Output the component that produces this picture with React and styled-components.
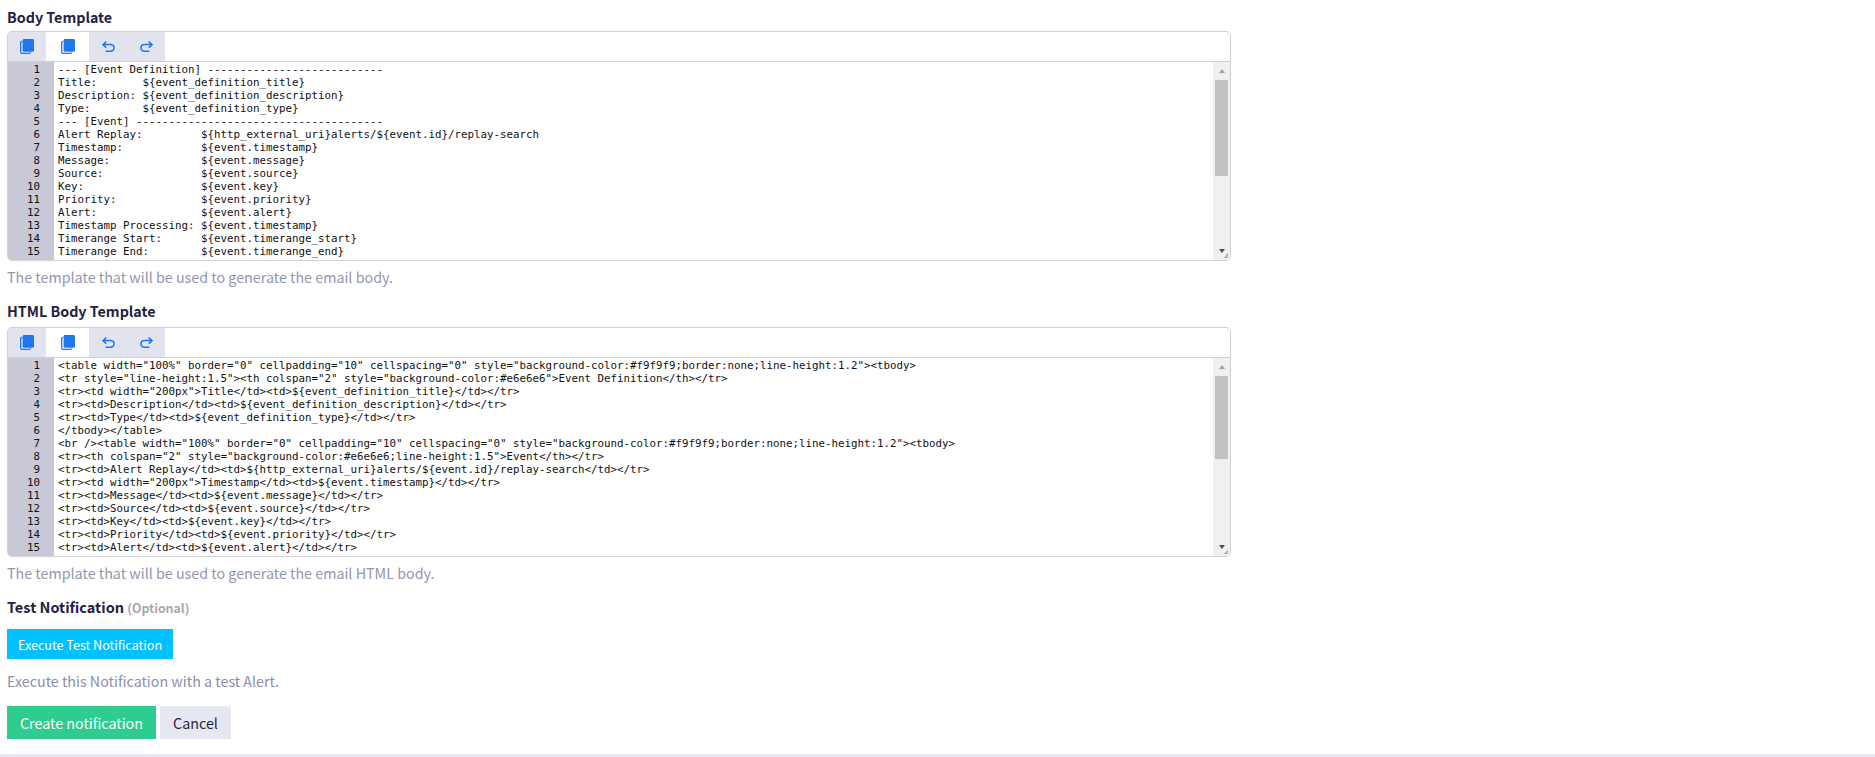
import React from "react";
import styled, { createGlobalStyle } from "styled-components";

const GlobalStyle = createGlobalStyle`
  html, body {
    margin: 0;
    padding: 0;
    background: #fff;
  }
  body {
    font-family: "Noto Sans CJK JP", "Source Sans Pro", sans-serif;
    color: #1f1f3d;
  }
`;

const Page = styled.div`
  height: 757px;
  box-sizing: border-box;
  padding: 6px 644px 0 7px;
  border-bottom: 3px solid #e8e8f1;
  overflow: hidden;
`;

const Field = styled.div`
  margin-bottom: 13px;
`;

const Label = styled.div`
  font-size: 14.3px;
  font-weight: 700;
  line-height: 21px;
  height: ${(p) => p.$h || 25}px;
  color: #1f2340;

  small {
    font-size: 12.3px;
    color: #a6a6ae;
    font-weight: 700;
  }
`;

const Help = styled.div`
  font-size: 14.3px;
  line-height: 20px;
  margin-top: 6px;
  color: #9397ad;
`;

const EditorBox = styled.div`
  border: 1px solid #cfcfd6;
  border-radius: 5px;
  height: 230px;
  box-sizing: border-box;
  overflow: hidden;
  position: relative;
  display: flex;
  flex-direction: column;
`;

const Toolbar = styled.div`
  display: flex;
  height: 29px;
  flex: none;
  border-bottom: 1px solid #cfcfd6;
`;

const ToolButton = styled.div`
  width: ${(p) => p.$w}px;
  display: flex;
  align-items: center;
  justify-content: center;
  background: ${(p) => (p.$active ? "#fff" : "#e1e4ef")};
`;

const EditorBody = styled.div`
  flex: 1;
  display: flex;
  min-height: 0;
`;

const Gutter = styled.div`
  width: 46px;
  flex: none;
  box-sizing: border-box;
  background: #c9c8d7;
  padding: 1px 14px 0 0;
  text-align: right;
  overflow: hidden;
`;

const Code = styled.pre`
  flex: 1;
  margin: 0;
  padding: 1px 0 0 4px;
  overflow: hidden;
  color: #111;
`;

const Line = styled.div`
  font-family: "DejaVu Sans Mono", monospace;
  font-size: 10.8px;
  line-height: 13px;
  height: 13px;
  white-space: pre;
  color: #111;
`;

const Scrollbar = styled.div`
  width: 17px;
  flex: none;
  background: #f0f0f0;
  display: flex;
  flex-direction: column;
  align-items: center;
`;

const Arrow = styled.div`
  width: 0;
  height: 0;
  flex: none;
  border-left: 3.5px solid transparent;
  border-right: 3.5px solid transparent;
  ${(p) =>
    p.$down
      ? "border-top: 4px solid #505050; margin-top: auto; margin-bottom: 7px;"
      : "border-bottom: 4px solid #a3a3a3; margin-top: 7px;"}
`;

const Thumb = styled.div`
  width: 13px;
  height: ${(p) => p.$h}px;
  margin-top: 7px;
  background: #c1c1c1;
  flex: none;
`;

const Grip = styled.div`
  position: absolute;
  right: 2px;
  bottom: 2px;
  width: 5px;
  height: 5px;
  background: linear-gradient(135deg, transparent 50%, #b4b4b4 50%);
`;

const TestLabel = styled(Label)`
  font-size: 14.5px;
  height: 32px;
  line-height: 20px;
  padding-top: 1px;
`;

const ExecuteButton = styled.button`
  display: block;
  width: 166px;
  height: 30px;
  padding: 0;
  border: 0;
  background: #00c1ff;
  color: #fff;
  font-family: inherit;
  font-size: 12.6px;
`;

const TestHelp = styled(Help)`
  margin-top: 12px;
  color: #8e8ea8;
`;

const Actions = styled.div`
  display: flex;
  gap: 4px;
  margin-top: 15px;
`;

const ActionButton = styled.button`
  height: 33px;
  width: ${(p) => p.$w}px;
  padding: 0;
  border: 0;
  font-family: inherit;
  font-size: 14.3px;
  background: ${(p) => (p.$primary ? "#2ecc8f" : "#e6e8f1")};
  color: ${(p) => (p.$primary ? "#fff" : "#1f2340")};
`;

const CopyIcon = () => (
  <svg width="14" height="15" viewBox="0 0 14 15">
    <path
      d="M2.2 2.4 H1.8 A1.2 1.2 0 0 0 0.7 3.6 V13 A1.3 1.3 0 0 0 2 14.3 H9.4 A1.2 1.2 0 0 0 10.6 13.2"
      fill="none"
      stroke="#1f77ee"
      strokeWidth="1.3"
    />
    <rect x="2.6" y="0" width="11.4" height="12.8" rx="1.4" fill="#1f77ee" />
  </svg>
);

const UndoIcon = ({ flip }) => (
  <svg width="13" height="11" viewBox="0 0 13 11" style={flip ? { transform: "scaleX(-1)" } : undefined}>
    <path
      d="M4.2 0.6 L1 3.6 L4.2 6.6 M1.2 3.6 H8.2 C10.6 3.6 12 4.9 12 6.8 C12 8.8 10.5 10.2 8.2 10.2 H3.6"
      fill="none"
      stroke="#1f77ee"
      strokeWidth="1.5"
    />
  </svg>
);

const bodyLines = [
  "--- [Event Definition] ---------------------------",
  "Title:       ${event_definition_title}",
  "Description: ${event_definition_description}",
  "Type:        ${event_definition_type}",
  "--- [Event] --------------------------------------",
  "Alert Replay:         ${http_external_uri}alerts/${event.id}/replay-search",
  "Timestamp:            ${event.timestamp}",
  "Message:              ${event.message}",
  "Source:               ${event.source}",
  "Key:                  ${event.key}",
  "Priority:             ${event.priority}",
  "Alert:                ${event.alert}",
  "Timestamp Processing: ${event.timestamp}",
  "Timerange Start:      ${event.timerange_start}",
  "Timerange End:        ${event.timerange_end}",
  "Fields:",
];

const htmlLines = [
  '<table width="100%" border="0" cellpadding="10" cellspacing="0" style="background-color:#f9f9f9;border:none;line-height:1.2"><tbody>',
  '<tr style="line-height:1.5"><th colspan="2" style="background-color:#e6e6e6">Event Definition</th></tr>',
  '<tr><td width="200px">Title</td><td>${event_definition_title}</td></tr>',
  "<tr><td>Description</td><td>${event_definition_description}</td></tr>",
  "<tr><td>Type</td><td>${event_definition_type}</td></tr>",
  "</tbody></table>",
  '<br /><table width="100%" border="0" cellpadding="10" cellspacing="0" style="background-color:#f9f9f9;border:none;line-height:1.2"><tbody>',
  '<tr><th colspan="2" style="background-color:#e6e6e6;line-height:1.5">Event</th></tr>',
  "<tr><td>Alert Replay</td><td>${http_external_uri}alerts/${event.id}/replay-search</td></tr>",
  '<tr><td width="200px">Timestamp</td><td>${event.timestamp}</td></tr>',
  "<tr><td>Message</td><td>${event.message}</td></tr>",
  "<tr><td>Source</td><td>${event.source}</td></tr>",
  "<tr><td>Key</td><td>${event.key}</td></tr>",
  "<tr><td>Priority</td><td>${event.priority}</td></tr>",
  "<tr><td>Alert</td><td>${event.alert}</td></tr>",
  "<tr><td>Timestamp Processing</td><td>${event.timestamp}</td></tr>",
];

function Editor({ lines, thumb }) {
  return (
    <EditorBox>
      <Toolbar>
        <ToolButton $w={38}>
          <CopyIcon />
        </ToolButton>
        <ToolButton $w={43} $active>
          <CopyIcon />
        </ToolButton>
        <ToolButton $w={38}>
          <UndoIcon />
        </ToolButton>
        <ToolButton $w={38}>
          <UndoIcon flip />
        </ToolButton>
      </Toolbar>
      <EditorBody>
        <Gutter>
          {lines.map((_, i) => (
            <Line key={i}>{i + 1}</Line>
          ))}
        </Gutter>
        <Code>
          {lines.map((l, i) => (
            <Line key={i}>{l}</Line>
          ))}
        </Code>
        <Scrollbar>
          <Arrow />
          <Thumb $h={thumb} />
          <Arrow $down />
        </Scrollbar>
      </EditorBody>
      <Grip />
    </EditorBox>
  );
}

export default function App() {
  return (
    <Page>
      <GlobalStyle />
      <Field>
        <Label>Body Template</Label>
        <Editor lines={bodyLines} thumb={96} />
        <Help>The template that will be used to generate the email body.</Help>
      </Field>
      <Field>
        <Label $h={27}>HTML Body Template</Label>
        <Editor lines={htmlLines} thumb={83} />
        <Help>The template that will be used to generate the email HTML body.</Help>
      </Field>
      <TestLabel>
        Test Notification <small>(Optional)</small>
      </TestLabel>
      <ExecuteButton>Execute Test Notification</ExecuteButton>
      <TestHelp>Execute this Notification with a test Alert.</TestHelp>
      <Actions>
        <ActionButton $primary $w={149}>
          Create notification
        </ActionButton>
        <ActionButton $w={71}>Cancel</ActionButton>
      </Actions>
    </Page>
  );
}
